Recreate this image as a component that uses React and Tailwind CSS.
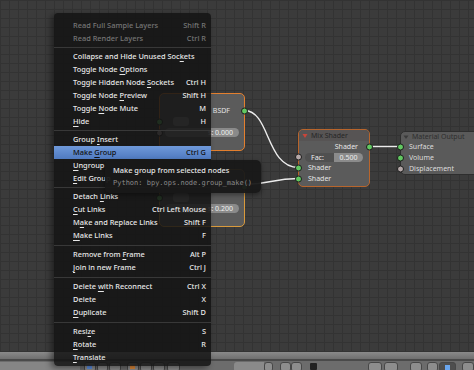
import React from 'react';

// Node editor context menu (Blender 2.7x style)
const menuItems = [
  { label: 'Read Full Sample Layers', keys: 'Shift R', disabled: true },
  { label: 'Read Render Layers', keys: 'Ctrl R', disabled: true },
  { sep: 5 },
  { label: 'Collapse and Hide Unused Soc&kets' },
  { label: 'Toggle Node &Options' },
  { label: 'Toggle Hidden Node &Sockets', keys: 'Ctrl H' },
  { label: 'Toggle Node &Preview', keys: 'Shift H' },
  { label: 'Toggle &Node Mute', keys: 'M' },
  { label: '&Hide', keys: 'H' },
  { sep: 5 },
  { label: 'Group &Insert' },
  { label: 'Make &Group', keys: 'Ctrl G', active: true },
  { label: '&Ungroup' },
  { label: '&Edit Group' },
  { sep: 5 },
  { label: 'Detach &Links' },
  { label: '&Cut Links', keys: 'Ctrl Left Mouse' },
  { label: 'M&ake and Replace Links', keys: 'Shift F' },
  { label: '&Make Links', keys: 'F' },
  { sep: 6 },
  { label: 'Remove from &Frame', keys: 'Alt P' },
  { label: '&Join in new Frame', keys: 'Ctrl J' },
  { sep: 6 },
  { label: 'Delete &with Reconnect', keys: 'Ctrl X' },
  { label: 'Delete', keys: 'X' },
  { label: '&Duplicate', keys: 'Shift D' },
  { sep: 6 },
  { label: 'Resi&ze', keys: 'S' },
  { label: '&Rotate', keys: 'R' },
  { label: '&Translate' },
];

// '&' marks the underlined mnemonic letter
const Mnemonic = ({ text }) => {
  const i = text.indexOf('&');
  if (i < 0) return <span>{text}</span>;
  return (
    <span>
      {text.slice(0, i)}
      <span className="underline underline-offset-[1.5px] decoration-[0.8px]">{text[i + 1]}</span>
      {text.slice(i + 2)}
    </span>
  );
};

const Socket = ({ side, gray }) => (
  <span
    className={`absolute top-1/2 -translate-y-1/2 w-[7px] h-[7px] rounded-full border border-[#1c1c1c] ${
      side === 'left' ? 'left-[-4px]' : 'right-[-4px]'
    } ${gray ? 'bg-[#b4a8a8]' : 'bg-[#62c862]'}`}
  />
);

const Row = ({ children, className = '' }) => (
  <div className={`relative h-[11px] flex items-center ${className}`}>{children}</div>
);

// BSDF nodes sit mostly under the menu; only their right part shows
const BsdfNode = ({ top, value, border, showOutput }) => (
  <div
    className={`absolute left-[159px] w-[86px] rounded-[5px] border ${border} bg-[#5b5b5b] text-[7px] leading-none`}
    style={{ top }}
  >
    <div className="h-[11px]" />
    <Row className="justify-end pr-[14px] text-[#e2e2e2]">
      {showOutput && 'BSDF'}
      <Socket side="right" />
    </Row>
    <Row className="pl-[13px]">
      <span className="w-[16px] h-[9px] rounded-[3px] bg-[#8e8e8e]" />
      <Socket side="left" />
    </Row>
    <Row className="px-[5px]">
      <div className="flex-1 h-[9px] rounded-full bg-[#8a8a8a] flex items-center justify-end pr-[6px] text-[#f0f0f0]">
        s: {value}
      </div>
      <Socket side="left" gray />
    </Row>
    <div className="relative h-[12px]" />
  </div>
);

const Links = () => (
  <svg className="absolute inset-0" width="474" height="352" fill="none" stroke="#ececec" strokeWidth="1.4">
    <path d="M244.5 110.5 C270 110.5 266 167.5 298.5 167.5" />
    <path d="M244.5 184.5 C270 184.5 272 178.5 298.5 178.5" />
    <path d="M369.5 146.5 C385 146.5 385 146.5 400.5 146.5" />
  </svg>
);

const HeaderButton = ({ w, ml, tone = 'bg-[#8d8d8d]', children }) => (
  <div
    className={`h-[10px] rounded-[3px] border border-[#474747] ${tone} flex items-start justify-center pt-[2px]`}
    style={{ width: w, marginLeft: ml }}
  >
    {children}
  </div>
);

export default function App() {
  return (
    <div className="relative w-[474px] h-[370px] overflow-hidden flex flex-col font-['Noto_Sans',sans-serif] bg-[#3b3b3b]">
      {/* node canvas */}
      <div className="relative h-[352px] shrink-0 bg-[#3b3b3b] bg-[linear-gradient(to_right,#333333_1px,transparent_1px),linear-gradient(to_bottom,#333333_1px,transparent_1px)] bg-[size:9px_9px]">
        <Links />

        <BsdfNode top={93} value="0.000" border="border-[#e37f2e]" showOutput />
        <BsdfNode top={169} value="0.200" border="border-[#d99a3c]" />

        {/* Mix Shader */}
        <div className="absolute left-[298px] top-[129px] w-[72px] h-[58px] rounded-[5px] border border-[#b8652c] bg-[#5b5b5b] text-[7px] leading-none">
          <div className="h-[11px] flex items-center pl-[3px] gap-[3px] text-[#262626] rounded-t-[4px] bg-[#575454]">
            <svg width="6" height="6" viewBox="0 0 6 6">
              <path d="M0.5 1 L5.5 1 L3 5 Z" fill="#c9453a" />
            </svg>
            Mix Shader
          </div>
          <Row className="justify-end pr-[11px] text-[#e6e6e6]">
            Shader
            <Socket side="right" />
          </Row>
          <div className="relative h-[10px] flex items-center px-[6px]">
            <div className="flex-1 h-[9px] rounded-full overflow-hidden flex text-[#ececec]">
              <div className="w-1/2 bg-[#505050] flex items-center pl-[6px]">Fac:</div>
              <div className="w-1/2 bg-[#8b8b8b] flex items-center justify-center">0.500</div>
            </div>
            <Socket side="left" gray />
          </div>
          <Row className="pl-[9px] text-[#e6e6e6]">
            Shader
            <Socket side="left" />
          </Row>
          <Row className="pl-[9px] text-[#e6e6e6]">
            Shader
            <Socket side="left" />
          </Row>
        </div>

        {/* Material Output */}
        <div className="absolute left-[400px] top-[131px] w-[84px] h-[44px] rounded-[5px] border border-[#2e2e2e] bg-[#5a5a5a] text-[7px] leading-none">
          <div className="h-[9px] flex items-center pl-[2px] gap-[3px] text-[#2e2e2e]">
            <svg width="6" height="6" viewBox="0 0 6 6">
              <path d="M0.5 1.5 L5.5 1.5 L3 5 Z" fill="#3a3a3a" />
            </svg>
            Material Output
          </div>
          <Row className="pl-[8px] text-[#dcdcdc]">
            Surface
            <Socket side="left" />
          </Row>
          <Row className="pl-[8px] text-[#dcdcdc]">
            Volume
            <Socket side="left" />
          </Row>
          <Row className="pl-[8px] text-[#dcdcdc]">
            Displacement
            <Socket side="left" gray />
          </Row>
        </div>
      </div>

      {/* region divider + header */}
      <div className="h-[7px] shrink-0 bg-[linear-gradient(#8a8a8a,#6f6f6f)]" />
      <div className="h-[2px] shrink-0 bg-[#4a4a4a]" />
      <div className="h-[9px] shrink-0 bg-[#6c6c6c] flex items-start pt-[1px] overflow-hidden">
        <div className="w-[80px] h-[10px] bg-[#858585]" />
        <HeaderButton w={12} ml={4}>
          <span className="w-[5px] h-[4px] bg-[#5d8fe0]" />
        </HeaderButton>
        <HeaderButton w={11} ml={1} />
        <HeaderButton w={12} ml={1} />
        <HeaderButton w={12} ml={6}>
          <span className="w-[5px] h-[4px] bg-[#e08a3a]" />
        </HeaderButton>
        <HeaderButton w={12} ml={1} />
        <HeaderButton w={12} ml={1} />
        <HeaderButton w={14} ml={2} />
        <div className="w-[30px] h-[10px] ml-[54px] bg-[#8a8a8a] rounded-l-[3px]" />
        <HeaderButton w={9} ml={0} />
        <HeaderButton w={11} ml={7} />
        <HeaderButton w={11} ml={0} />
        <div className="w-[7px] h-[7px] ml-[8px] mt-[1px] bg-[#222222] rounded-[1px]" />
        <HeaderButton w={14} ml={51} />
        <HeaderButton w={14} ml={2} />
        <HeaderButton w={12} ml={12} />
        <HeaderButton w={11} ml={5} />
        <HeaderButton w={17} ml={1} tone="bg-[#4e4e4e]">
          <span className="w-[5px] h-[5px] bg-[#6aa6ee]" />
        </HeaderButton>
        <HeaderButton w={12} ml={6} />
      </div>

      {/* context menu */}
      <div className="absolute left-[54px] top-[13px] w-[157px] h-[353px] rounded-[4px] bg-[rgba(20,20,20,0.86)] shadow-[-3px_2px_6px_rgba(0,0,0,0.45)] pt-[6px] text-[7.4px] font-medium leading-none text-[#e8e8e8]">
        {menuItems.map((it, i) =>
          it.sep ? (
            <div key={i} className="flex items-center" style={{ height: it.sep }}>
              <div className="w-full h-px bg-[#383838]" />
            </div>
          ) : (
            <div
              key={i}
              className={`h-[13px] flex items-center justify-between pl-[19px] pr-[5px] ${
                it.active ? 'bg-[linear-gradient(#6f99da,#4f7ac0)] text-[#111111]' : ''
              } ${it.disabled ? 'text-[#767676]' : ''}`}
            >
              <Mnemonic text={it.label} />
              {it.keys && <span>{it.keys}</span>}
            </div>
          )
        )}
      </div>

      {/* tooltip */}
      <div className="absolute left-[105px] top-[160px] w-[156px] h-[33px] rounded-[5px] bg-[rgba(24,24,24,0.95)] shadow-[0_2px_5px_rgba(0,0,0,0.4)] pl-[8px] pt-[7px] flex flex-col gap-[6px] leading-none">
        <span className="text-[7.4px] font-medium text-[#e8e8e8]">Make group from selected nodes</span>
        <span className="text-[7px] text-[#8a8a8a] font-['DejaVu_Sans_Mono',monospace]">Python: bpy.ops.node.group_make()</span>
      </div>
    </div>
  );
}
